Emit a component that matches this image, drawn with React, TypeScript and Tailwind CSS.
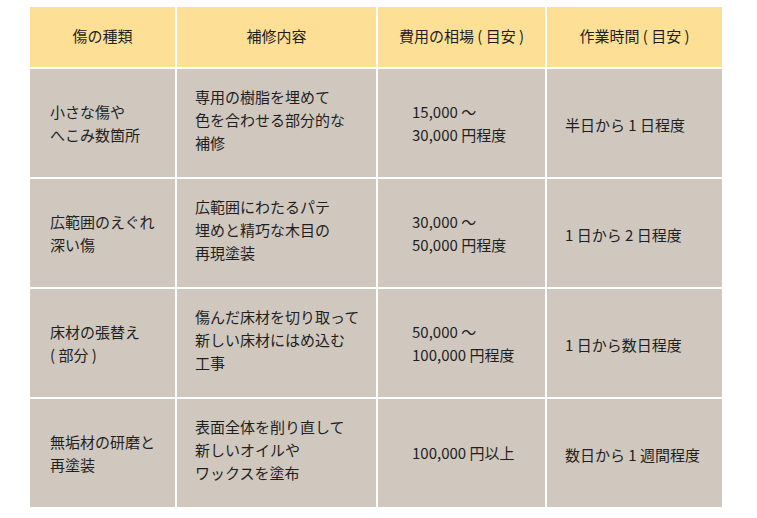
const headers = ['傷の種類', '補修内容', '費用の相場 ( 目安 )', '作業時間 ( 目安 )'];

const rows = [
  {
    type: ['小さな傷や', 'へこみ数箇所'],
    work: ['専用の樹脂を埋めて', '色を合わせる部分的な', '補修'],
    cost: ['15,000 ～', '30,000 円程度'],
    time: '半日から 1 日程度',
  },
  {
    type: ['広範囲のえぐれ', '深い傷'],
    work: ['広範囲にわたるパテ', '埋めと精巧な木目の', '再現塗装'],
    cost: ['30,000 ～', '50,000 円程度'],
    time: '1 日から 2 日程度',
  },
  {
    type: ['床材の張替え', '( 部分 )'],
    work: ['傷んだ床材を切り取って', '新しい床材にはめ込む', '工事'],
    cost: ['50,000 ～', '100,000 円程度'],
    time: '1 日から数日程度',
  },
  {
    type: ['無垢材の研磨と', '再塗装'],
    work: ['表面全体を削り直して', '新しいオイルや', 'ワックスを塗布'],
    cost: ['100,000 円以上'],
    time: '数日から 1 週間程度',
  },
];

const Lines = ({ lines }: { lines: string[] }) => (
  <div>
    {lines.map((l) => (
      <div key={l}>{l}</div>
    ))}
  </div>
);

export default function App() {
  return (
    <div
      className="min-h-[518px] w-[757px] bg-white pl-[30px] pt-[7px] text-[15px] leading-[23px] text-[#1f1f1f]"
      style={{ fontFamily: '"Noto Sans CJK JP", "Noto Sans", sans-serif' }}
    >
      <div className="grid w-[692px] grid-cols-[145px_199px_167px_175px] gap-[2px]">
        {headers.map((h) => (
          <div key={h} className="flex h-[60px] items-center justify-center bg-[#fddf96] pb-[3px]">
            {h}
          </div>
        ))}
        {rows.map((r) => (
          <div key={r.time} className="contents">
            <div className="flex h-[108px] items-center bg-[#d0c8bf] pl-[20px]">
              <Lines lines={r.type} />
            </div>
            <div className="flex h-[108px] items-center bg-[#d0c8bf] pb-[7px] pl-[18px]">
              <Lines lines={r.work} />
            </div>
            <div className="flex h-[108px] items-center bg-[#d0c8bf] pb-[1px] pl-[34px]">
              <Lines lines={r.cost} />
            </div>
            <div className="flex h-[108px] items-center bg-[#d0c8bf] pl-[18px] pt-[3px]">
              {r.time}
            </div>
          </div>
        ))}
      </div>
    </div>
  );
}
